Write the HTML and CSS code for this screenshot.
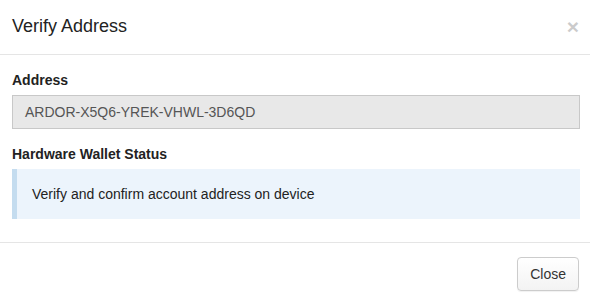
FILE: index.html
```html
<!DOCTYPE html>
<html>
<head>
<meta charset="utf-8">
<link rel="stylesheet" href="styles.css">
</head>
<body>
<div class="modal">
  <div class="modal-header">
    <h4 class="modal-title">Verify Address</h4>
    <button class="close" type="button">×</button>
  </div>
  <div class="modal-body">
    <div class="form-group">
      <label class="label">Address</label>
      <div class="input">ARDOR-X5Q6-YREK-VHWL-3D6QD</div>
    </div>
    <div class="form-group last">
      <label class="label">Hardware Wallet Status</label>
      <div class="callout">Verify and confirm account address on device</div>
    </div>
  </div>
  <div class="modal-footer">
    <button class="btn" type="button">Close</button>
  </div>
</div>
</body>
</html>
```

FILE: styles.css
```css
* { box-sizing: border-box; }
html, body { margin: 0; padding: 0; background: #fff; }
body {
  font-family: "Liberation Sans", Arial, Helvetica, sans-serif;
  font-size: 14px;
  line-height: 20px;
  color: #333;
  width: 590px;
}
.modal { width: 590px; }
.modal-header {
  display: flex;
  align-items: center;
  justify-content: space-between;
  padding: 14px 11px 15px 12px;
  border-bottom: 1px solid #e5e5e5;
}
.modal-title {
  margin: 0;
  font-size: 18px;
  font-weight: normal;
  line-height: 25px;
  color: #222;
}
.close {
  background: none;
  border: 0;
  padding: 0;
  font-family: "Liberation Sans", Arial, sans-serif;
  font-size: 21px;
  font-weight: bold;
  line-height: 1;
  color: #000;
  opacity: 0.2;
  cursor: pointer;
}
.modal-body {
  padding: 15px 10px 23px 12px;
}
.form-group { margin-bottom: 15px; }
.form-group.last { margin-bottom: 0; }
.label {
  display: block;
  font-weight: bold;
  margin-bottom: 5px;
  color: #222;
}
.input {
  height: 34px;
  padding: 6px 12px;
  border: 1px solid #c8c8c8;
  background: #e8e8e8;
  color: #555;
  line-height: 20px;
}
.callout {
  background: #ecf4fc;
  border-left: 5px solid #c4dcef;
  padding: 15px 15px;
  color: #222;
  line-height: 20px;
}
.modal-footer {
  border-top: 1px solid #e5e5e5;
  padding: 14px 11px 15px 12px;
  display: flex;
  justify-content: flex-end;
}
.btn {
  font-family: "Liberation Sans", Arial, sans-serif;
  font-size: 14px;
  line-height: 20px;
  height: 34px;
  padding: 6px 12px;
  color: #333;
  background: linear-gradient(#fff, #f3f3f3);
  border: 1px solid #ccc;
  border-radius: 4px;
  box-shadow: 0 1px 1px rgba(0,0,0,0.06);
}
```
